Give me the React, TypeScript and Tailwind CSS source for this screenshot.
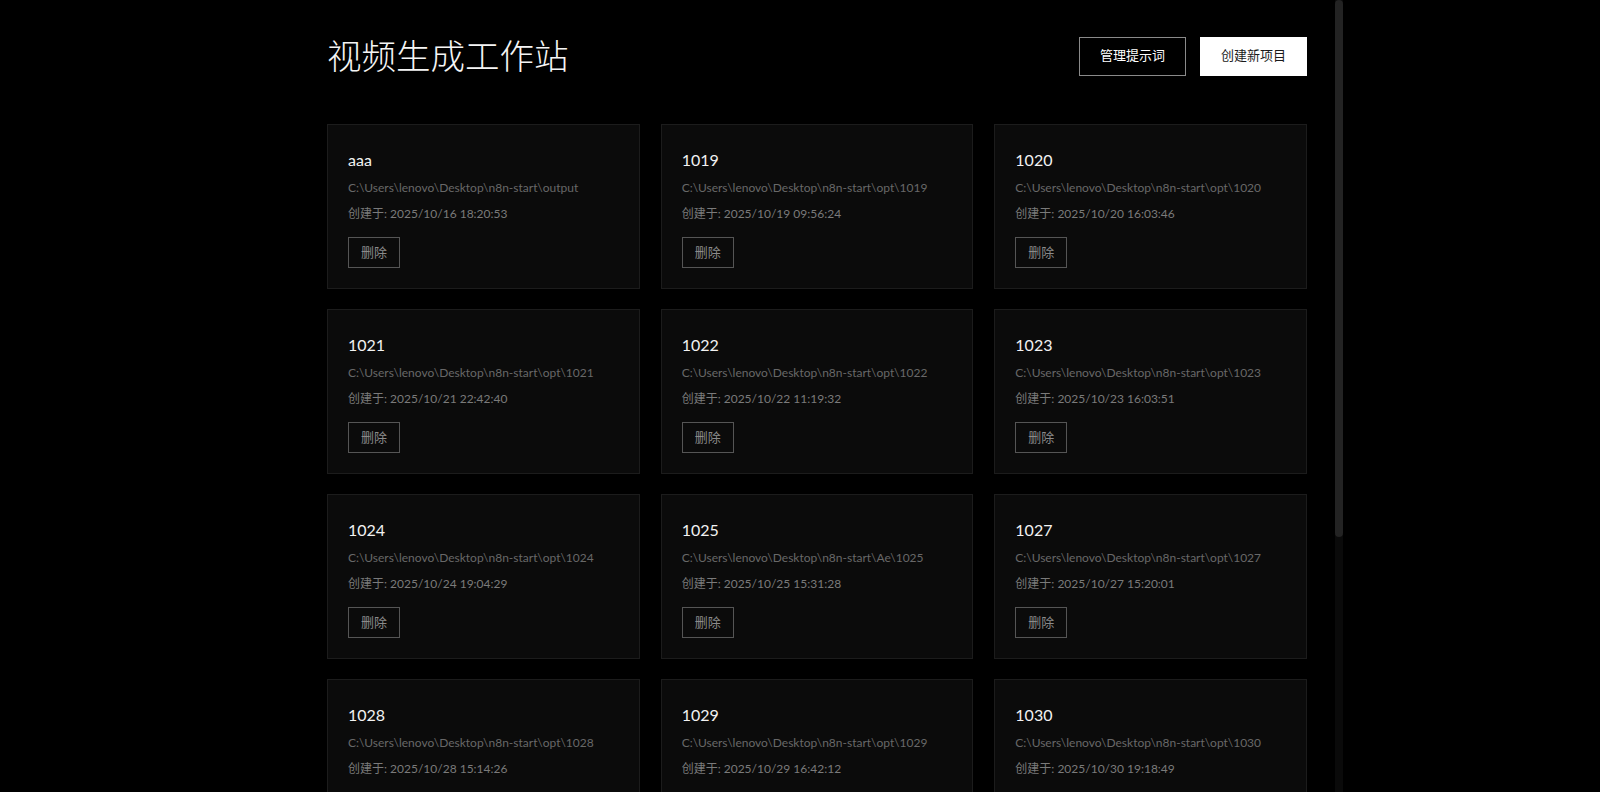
const projects = [
  { name: 'aaa', path: 'C:\\Users\\lenovo\\Desktop\\n8n-start\\output', created: '2025/10/16 18:20:53' },
  { name: '1019', path: 'C:\\Users\\lenovo\\Desktop\\n8n-start\\opt\\1019', created: '2025/10/19 09:56:24' },
  { name: '1020', path: 'C:\\Users\\lenovo\\Desktop\\n8n-start\\opt\\1020', created: '2025/10/20 16:03:46' },
  { name: '1021', path: 'C:\\Users\\lenovo\\Desktop\\n8n-start\\opt\\1021', created: '2025/10/21 22:42:40' },
  { name: '1022', path: 'C:\\Users\\lenovo\\Desktop\\n8n-start\\opt\\1022', created: '2025/10/22 11:19:32' },
  { name: '1023', path: 'C:\\Users\\lenovo\\Desktop\\n8n-start\\opt\\1023', created: '2025/10/23 16:03:51' },
  { name: '1024', path: 'C:\\Users\\lenovo\\Desktop\\n8n-start\\opt\\1024', created: '2025/10/24 19:04:29' },
  { name: '1025', path: 'C:\\Users\\lenovo\\Desktop\\n8n-start\\Ae\\1025', created: '2025/10/25 15:31:28' },
  { name: '1027', path: 'C:\\Users\\lenovo\\Desktop\\n8n-start\\opt\\1027', created: '2025/10/27 15:20:01' },
  { name: '1028', path: 'C:\\Users\\lenovo\\Desktop\\n8n-start\\opt\\1028', created: '2025/10/28 15:14:26' },
  { name: '1029', path: 'C:\\Users\\lenovo\\Desktop\\n8n-start\\opt\\1029', created: '2025/10/29 16:42:12' },
  { name: '1030', path: 'C:\\Users\\lenovo\\Desktop\\n8n-start\\opt\\1030', created: '2025/10/30 19:18:49' },
]

function ProjectCard({ p }: { p: (typeof projects)[0] }) {
  return (
    <div className="border border-[#1c1c1c] bg-[#0b0b0b] px-5 pb-5 pt-[21px]">
      <h3 className="mt-[2px] text-base leading-6 text-[#f2f2f2]">{p.name}</h3>
      <p className="mt-[6px] whitespace-nowrap text-[12px] leading-5 text-[#686868]">{p.path}</p>
      <p className="mt-[6px] whitespace-nowrap text-[12px] leading-5 text-[#7a7a7a]">创建于: {p.created}</p>
      <button className="mt-[13px] flex h-[31px] items-center border border-[#555] px-3 text-[13px] text-[#8a8a8a]">
        删除
      </button>
    </div>
  )
}

export default function App() {
  return (
    <div
      className="flex h-[792px] w-full overflow-hidden bg-black"
      style={{ fontFamily: '"Segoe UI", Lato, "Noto Sans CJK SC", sans-serif' }}
    >
      <div className="w-[299px] shrink-0" />
      <main className="flex h-full w-[1044px] shrink-0">
        <div className="h-full flex-1 overflow-hidden">
          <div className="mx-auto w-[980px] pt-9">
            {/* header */}
            <div className="flex items-center justify-between">
              <h1 className="text-[34.5px] font-light leading-10 text-[#f5f5f5]">视频生成工作站</h1>
              <div className="flex gap-[14px]">
                <button className="flex h-[39px] items-center border border-[#8a8a8a] bg-black px-5 text-[13px] text-white">
                  管理提示词
                </button>
                <button className="flex h-[39px] items-center border border-white bg-white px-5 text-[13px] text-[#1a1a1a]">
                  创建新项目
                </button>
              </div>
            </div>

            <div className="mt-[48px] grid grid-cols-3 gap-x-[21px] gap-y-5">
              {projects.map((p) => (
                <ProjectCard key={p.name} p={p} />
              ))}
            </div>
          </div>
        </div>

        {/* scrollbar */}
        <div className="h-full w-2 shrink-0 bg-[#0a0a0a]">
          <div className="h-[537px] w-full rounded-full bg-[#232323]" />
        </div>
      </main>
    </div>
  )
}
